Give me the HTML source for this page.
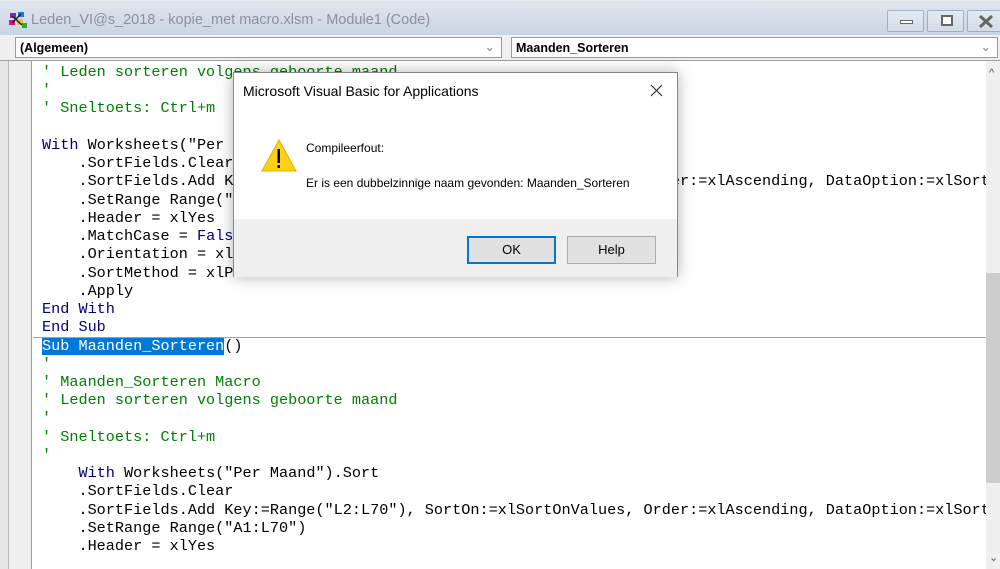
<!DOCTYPE html>
<html><head><meta charset="utf-8"><style>
*{margin:0;padding:0;box-sizing:border-box}
body{width:1000px;height:569px;overflow:hidden;position:relative;background:#fff;font-family:"Liberation Sans",sans-serif}
.title{position:absolute;left:0;top:0;width:1000px;height:35px;background:linear-gradient(#dfe6ee,#c9d5e3);border-top:1px solid #e8edf2}
.title .t{position:absolute;left:31px;top:11px;font-size:14.5px;color:#8a929b}
.wb{position:absolute;top:9px;height:22px;border:1px solid #9fb0c4;border-radius:2px;background:linear-gradient(#e3eaf2,#d3dce7)}
.bar{position:absolute;left:0;top:35px;width:1000px;height:26px;background:#f0f0f0;border-bottom:1px solid #a0a0a0}
.dd{position:absolute;top:2px;height:21px;background:#fff;border:1px solid #9a9a9a;font-weight:bold;font-size:12.5px;padding:3px 0 0 4px;color:#000}
.dd span{position:absolute;right:6px;top:1px;color:#888;font-weight:normal}
.gut{position:absolute;left:0;top:61px;width:32px;height:508px;background:#f0f0f0;border-left:8px solid #e6e6e6;border-right:1px solid #a0a0a0}
.gut:before{content:"";position:absolute;left:0;top:0;width:1px;height:100%;background:#bbb}
.code{position:absolute;left:42px;top:63px;font-family:"Liberation Mono",monospace;font-size:15.2px;line-height:18.23px;white-space:pre;color:#000}
.g{color:#008000}.k{color:#00007f}
.sel{background:#0078d7;color:#fff}
.sep{position:absolute;left:33px;top:337px;width:953px;height:1px;background:#a0a0a0}
.sb{position:absolute;left:986px;top:61px;width:14px;height:508px;background:#f0f0f0}
.thumb{position:absolute;left:986px;top:273px;width:14px;height:210px;background:#cdcdcd}
.dlg{position:absolute;left:233px;top:72px;width:445px;height:205px;background:#fff;border:1px solid #888;box-shadow:0 0 14px rgba(0,0,0,.3)}
.dlg .h{position:absolute;left:9px;top:10px;font-size:14px;color:#000}
.foot{position:absolute;left:0;top:146px;width:443px;height:58px;background:#f0f0f0}
.btn{position:absolute;top:17px;height:28px;width:89px;background:#e1e1e1;border:1px solid #adadad;font-size:13px;text-align:center;line-height:26px}
.m{position:absolute;left:72px;font-size:12px;color:#000}
</style></head><body>
<div class="title">
<svg style="position:absolute;left:8px;top:10px" width="20" height="18"><rect x="2" y="2" width="6" height="5" fill="#7a2bb5"/><rect x="10" y="1" width="6" height="5" fill="#1a7ad4"/><rect x="1" y="9" width="6" height="5" fill="#d41a8a"/><rect x="9" y="8" width="6" height="6" fill="#e6c81a"/><rect x="14" y="12" width="5" height="5" fill="#2aa84a"/><path d="M4 5L14 14M13 3L4 12" stroke="#222" stroke-width="1.5"/></svg>
<div class="t">Leden_VI@s_2018 - kopie_met macro.xlsm - Module1 (Code)</div>
<div class="wb" style="left:887px;width:37px"><div style="position:absolute;left:12px;top:9px;width:13px;height:4px;border:1px solid #666;background:#fff"></div></div>
<div class="wb" style="left:927px;width:37px"><div style="position:absolute;left:13px;top:4px;width:12px;height:11px;border:2px solid #666;background:#fff"></div></div>
<div class="wb" style="left:967px;width:35px"><svg style="position:absolute;left:10px;top:3px" width="16" height="15"><path d="M2 2L14 13M14 2L2 13" stroke="#666" stroke-width="3"/></svg></div>
</div>
<div class="bar">
<div class="dd" style="left:15px;width:487px">(Algemeen)<span>⌄</span></div>
<div class="dd" style="left:511px;width:487px">Maanden_Sorteren<span>⌄</span></div>
</div>
<div class="gut"></div>
<div class="code"><span class="g">' Leden sorteren volgens geboorte maand</span>
<span class="g">'</span>
<span class="g">' Sneltoets: Ctrl+m</span>

<span class="k">With</span> Worksheets("Per Maand").Sort
    .SortFields.Clear
    .SortFields.Add Key:=Range("L2:L70"), SortOn:=xlSortOnValues, Order:=xlAscending, DataOption:=xlSortNormal
    .SetRange Range("A1:L70")
    .Header = xlYes
    .MatchCase = <span class="k">False</span>
    .Orientation = xlTopToBottom
    .SortMethod = xlPinYin
    .Apply
<span class="k">End With</span>
<span class="k">End Sub</span>
<span class="sel">Sub Maanden_Sorteren</span>()
<span class="g">'</span>
<span class="g">' Maanden_Sorteren Macro</span>
<span class="g">' Leden sorteren volgens geboorte maand</span>
<span class="g">'</span>
<span class="g">' Sneltoets: Ctrl+m</span>
<span class="g">'</span>
    <span class="k">With</span> Worksheets("Per Maand").Sort
    .SortFields.Clear
    .SortFields.Add Key:=Range("L2:L70"), SortOn:=xlSortOnValues, Order:=xlAscending, DataOption:=xlSortNormal
    .SetRange Range("A1:L70")
    .Header = xlYes</div>
<div class="sep"></div>
<div class="sb"><div style="position:absolute;left:3px;top:6px;font-size:11px;color:#555">^</div><div style="position:absolute;left:3px;top:490px;font-size:11px;color:#555">⌄</div></div>
<div class="thumb"></div>
<div class="dlg">
<div class="h">Microsoft Visual Basic for Applications</div>
<svg style="position:absolute;left:416px;top:11px" width="13" height="13"><path d="M1 1L12 12M12 1L1 12" stroke="#333" stroke-width="1.2"/></svg>
<svg style="position:absolute;left:27px;top:66px" width="36" height="34"><path d="M18 1L35 32H1Z" fill="#fcd116" stroke="#e0b000"/><rect x="16.5" y="10" width="2.5" height="14" fill="#000"/><rect x="16.5" y="26" width="2.5" height="3" fill="#000"/></svg>
<div class="m" style="top:68px">Compileerfout:</div>
<div class="m" style="top:103px">Er is een dubbelzinnige naam gevonden: Maanden_Sorteren</div>
<div class="foot">
<div class="btn" style="left:233px;border:2px solid #0078d7;line-height:24px">OK</div>
<div class="btn" style="left:333px">Help</div>
</div>
</div>
</body></html>
